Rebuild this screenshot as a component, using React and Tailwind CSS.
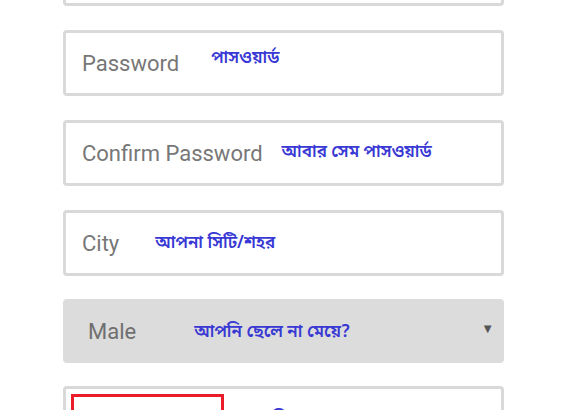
import React from 'react';

const fields = [
  { label: 'Email', hint: '', hintCls: 'ml-0' },
  { label: 'Password', hint: 'পাসওয়ার্ড', hintCls: 'ml-[32px] -translate-y-[4px]' },
  { label: 'Confirm Password', hint: 'আবার সেম পাসওয়ার্ড', hintCls: 'ml-[19px] translate-y-[0px]' },
  { label: 'City', hint: 'আপনা সিটি/শহর', hintCls: 'ml-[36px] translate-y-[1px]' },
];

function Hint({ text, className }) {
  return (
    <span
      className={`text-[17px] font-semibold text-[#3838d4] ${className}`}
      style={{ fontFamily: '"Noto Sans Bengali", "Noto Sans", "Lohit Bengali", sans-serif' }}
    >
      {text}
    </span>
  );
}

export default function App() {
  return (
    <div className="w-[567px] h-[410px] overflow-hidden bg-white font-['Roboto',sans-serif]">
      <div className="mx-[63px] -mt-[60px] flex flex-col gap-[24px]">
        {fields.map((f, i) => (
          <div
            key={i}
            className="h-[66px] rounded-[4px] border-[3px] border-[#d9d9d9] bg-white flex items-center px-[16px]"
          >
            {i > 0 && (
              <>
                <span className="text-[22px] text-[#777777] mt-[1px]">{f.label}</span>
                <Hint text={f.hint} className={f.hintCls} />
              </>
            )}
          </div>
        ))}
        <div className="-mt-[1px] h-[64px] rounded-[4px] bg-[#dcdcdc] flex items-center pl-[25px] pr-[10px]">
          <span className="text-[22px] text-[#6f6f6f]">Male</span>
          <Hint text="আপনি ছেলে না মেয়ে?" className="ml-[58px] translate-y-[2px]" />
          <span className="ml-auto text-[13px] text-[#555] -mt-[4px]">▼</span>
        </div>
        <div className="-mt-[1px] h-[66px] rounded-[4px] border-[3px] border-[#d9d9d9] bg-white pl-[5px] pt-[5px] flex items-start">
          <div className="w-[153px] h-[50px] border-[3px] border-[#ea1c2a]"></div>
          <Hint text="ছবি আপলোড করুন" className="ml-[38px] mt-[13px]" />
        </div>
      </div>
    </div>
  );
}
